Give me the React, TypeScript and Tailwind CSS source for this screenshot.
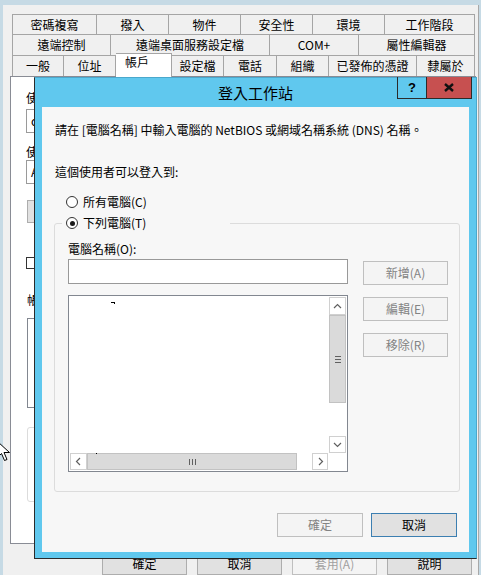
const tabRows = [
  [
    { label: '密碼複寫', w: 85 },
    { label: '撥入', w: 72 },
    { label: '物件', w: 72 },
    { label: '安全性', w: 72 },
    { label: '環境', w: 72 },
    { label: '工作階段', w: 90 },
  ],
  [
    { label: '遠端控制', w: 99 },
    { label: '遠端桌面服務設定檔', w: 159 },
    { label: 'COM+', w: 89 },
    { label: '屬性編輯器', w: 116 },
  ],
  [
    { label: '一般', w: 52 },
    { label: '位址', w: 52 },
    { label: '帳戶', w: 56, active: true },
    { label: '設定檔', w: 52 },
    { label: '電話', w: 53 },
    { label: '組織', w: 52 },
    { label: '已發佈的憑證', w: 88 },
    { label: '隸屬於', w: 58 },
  ],
];

const rowHeights = ['h-[20px]', 'h-[21px]', 'h-[21px]'];

function Chevron({ dir }: { dir: 'up' | 'down' | 'left' | 'right' }) {
  const pts = {
    up: '1,6 4.5,2.5 8,6',
    down: '1,3 4.5,6.5 8,3',
    left: '6,1 2.5,4.5 6,8',
    right: '3,1 6.5,4.5 3,8',
  }[dir];
  return (
    <svg width="9" height="9" viewBox="0 0 9 9">
      <polyline points={pts} fill="none" stroke="#606060" strokeWidth="1.2" />
    </svg>
  );
}

function Radio({ checked, label, indent }: { checked?: boolean; label: string; indent: string }) {
  return (
    <div className={`flex items-center h-[14px] ${indent}`}>
      <span className="w-[12px] h-[12px] rounded-full border border-[#333] bg-white flex items-center justify-center">
        {checked && <span className="w-[5px] h-[5px] rounded-full bg-[#1a1a1a]" />}
      </span>
      <span className="ml-[5px] leading-[14px]">{label}</span>
    </div>
  );
}

function DisabledButton({ label, w }: { label: string; w: string }) {
  return (
    <div className={`${w} h-[24px] border border-[#bfbfbf] bg-[#f4f4f4] text-[#838383] flex items-center justify-center leading-none`}>
      {label}
    </div>
  );
}

function BackWindow() {
  return (
    <div className="ml-[3px] mt-[5px] w-[476px] h-[570px] bg-[#f0f0f0] border-r border-[#a8a8a8]">
      {/* Tabs */}
      <div className="pt-[9px] pl-[9px]">
        {tabRows.map((row, i) => (
          <div key={i} className={`flex ${rowHeights[i]}`}>
            {row.map((tab, j) => (
              <div
                key={tab.label}
                style={{ width: tab.w }}
                className={
                  tab.active
                    ? 'relative z-10 -mt-[2px] h-[24px] bg-white border-t border-r border-[#a5a5a5] pl-[9px] pt-[1px] leading-[14px]'
                    : `flex items-center justify-center border-t border-r border-[#a5a5a5] leading-none ${j === 0 ? 'border-l' : ''}`
                }
              >
                {tab.label}
              </div>
            ))}
          </div>
        ))}
      </div>

      {/* Tab page */}
      <div className="ml-[7px] w-[466px] h-[468px] bg-white border border-[#898c95] pl-[15px] pt-[14px]">
        <div className="leading-[14px] whitespace-nowrap">使用者登入名稱(U):</div>
        <div className="mt-[4px] w-[200px] h-[24px] border border-[#9a9a9a] bg-white pl-[4px] leading-[22px]">chen</div>
        <div className="mt-[12px] leading-[14px] whitespace-nowrap">使用者登入名稱 (Windows 2000 前版)(W):</div>
        <div className="mt-[1px] w-[200px] h-[24px] border border-[#9a9a9a] bg-white pl-[4px] leading-[22px]">AD\</div>
        <div className="mt-[16px] w-[90px] h-[23px] border border-[#adadad] bg-[#e1e1e1] ml-px flex items-center justify-center">登入時數(L)...</div>
        <div className="mt-[33px] flex items-center h-[13px]">
          <span className="w-[12px] h-[12px] border border-[#333] bg-white" />
          <span className="ml-[5px]">解除鎖定帳戶(N)</span>
        </div>
        <div className="mt-[24px] leading-[14px] ml-px">帳戶選項(O):</div>
        <div className="mt-[11px] ml-px w-[300px] h-[90px] border border-[#828790] bg-white" />
        <div className="mt-[19px] ml-px w-[400px] h-[75px] border border-[#dcdcdc] rounded-[3px]" />
      </div>

      {/* Back window buttons */}
      <div className="mt-[8px] ml-[99px] flex gap-[10px]">
        {['確定', '取消'].map((b) => (
          <div key={b} className="w-[85px] h-[23px] border border-[#adadad] bg-[#e1e1e1] flex items-center justify-center">{b}</div>
        ))}
        <div className="w-[85px] h-[23px] border border-[#bfbfbf] bg-[#f4f4f4] text-[#a0a0a0] flex items-center justify-center">套用(A)</div>
        <div className="w-[85px] h-[23px] border border-[#adadad] bg-[#e1e1e1] flex items-center justify-center">說明</div>
      </div>
    </div>
  );
}

function ListBox() {
  return (
    <div className="relative mt-[11px] w-[280px] h-[177px] border border-[#828790] bg-white p-px flex flex-col">
      {/* stray marks */}
      <span className="absolute left-[42px] top-[6px] w-[4px] h-px bg-black" />
      <span className="absolute left-[45px] top-[6px] w-px h-[2px] bg-black" />
      <span className="absolute left-[27px] top-[157px] w-px h-px bg-black" />
      <div className="flex flex-1">
        <div className="flex-1" />
        <div className="w-[17px] flex flex-col">
          <div className="h-[18px] border border-[#d0d0d0] bg-white flex items-center justify-center"><Chevron dir="up" /></div>
          <div className="h-[88px] border border-[#c2c2c2] bg-[#dadada] flex flex-col items-center justify-center gap-[2px]">
            <span className="w-[6px] h-px bg-[#606060]" />
            <span className="w-[6px] h-px bg-[#606060]" />
            <span className="w-[6px] h-px bg-[#606060]" />
          </div>
          <div className="flex-1" />
          <div className="h-[17px] border border-[#d0d0d0] bg-white flex items-center justify-center"><Chevron dir="down" /></div>
        </div>
      </div>
      <div className="h-[17px] flex">
        <div className="w-[17px] border border-[#d0d0d0] bg-white flex items-center justify-center"><Chevron dir="left" /></div>
        <div className="w-[210px] border border-[#c2c2c2] bg-[#dadada] flex items-center justify-center gap-[2px]">
          <span className="w-px h-[6px] bg-[#606060]" />
          <span className="w-px h-[6px] bg-[#606060]" />
          <span className="w-px h-[6px] bg-[#606060]" />
        </div>
        <div className="flex-1" />
        <div className="w-[16px] border border-[#d0d0d0] bg-white flex items-center justify-center"><Chevron dir="right" /></div>
        <div className="w-[18px] bg-white" />
      </div>
    </div>
  );
}

function Dialog() {
  return (
    <div className="absolute left-[34px] top-[77px] w-[443px] h-[482px] bg-[#60c8ee] border-l border-b border-[#2b2b2b] border-t border-t-[#4aa8cc] border-r border-r-[#4aa8cc] flex flex-col">
      {/* Title bar */}
      <div className="relative h-[29px] flex items-center justify-center text-[15px] leading-none">
        登入工作站
        <div className="absolute -top-px right-[4px] flex border-x border-b border-[#2b2b2b] h-[22px]">
          <div className="w-[29px] border-r border-[#2b2b2b] flex items-center justify-center font-bold text-[13px] font-['Liberation_Sans',sans-serif]">?</div>
          <div className="w-[44px] bg-[#c75050] flex items-center justify-center">
            <svg width="10" height="9" viewBox="0 0 10 9">
              <path d="M1 1 L9 8 M9 1 L1 8" stroke="#111" strokeWidth="2.4" />
            </svg>
          </div>
        </div>
      </div>

      {/* Content */}
      <div className="mx-[7px] mb-[6px] flex-1 bg-[#f7f7f7] px-[12px] pt-[16px]">
        <p className="ml-px leading-[14px] whitespace-nowrap">請在 [電腦名稱] 中輸入電腦的 NetBIOS 或網域名稱系統 (DNS) 名稱。</p>
        <p className="ml-px mt-[28px] leading-[14px]">這個使用者可以登入到:</p>
        <div className="mt-[16px]">
          <Radio label="所有電腦(C)" indent="ml-[12px]" />
        </div>

        {/* Group box */}
        <div className="relative mt-[14px] w-[406px] h-[269px] border border-[#dcdcdc] rounded-[3px] px-[13px] pt-[18px]">
          <div className="absolute left-[7px] -top-[8px] w-[168px] bg-[#f7f7f7]">
            <Radio checked label="下列電腦(T)" indent="ml-[4px]" />
          </div>
          <div className="leading-[14px]">電腦名稱(O):</div>
          <div className="flex">
            <div>
              <div className="mt-[3px] w-[280px] h-[25px] border border-[#999] bg-white" />
              <ListBox />
            </div>
            <div className="ml-[15px] mt-[5px] flex flex-col gap-[12px]">
              <DisabledButton label="新增(A)" w="w-[85px]" />
              <DisabledButton label="編輯(E)" w="w-[85px]" />
              <DisabledButton label="移除(R)" w="w-[85px]" />
            </div>
          </div>
        </div>

        {/* OK / Cancel */}
        <div className="mt-[21px] flex justify-end gap-[8px]">
          <DisabledButton label="確定" w="w-[86px]" />
          <div className="w-[86px] h-[24px] border border-[#3c7fb1] bg-[#e1e1e1] flex items-center justify-center leading-none">取消</div>
        </div>
      </div>
    </div>
  );
}

export default function App() {
  return (
    <div className="relative w-[481px] h-[575px] overflow-hidden bg-[#c6dae5] text-[12px] text-black font-['Noto_Sans_CJK_TC','Noto_Sans',sans-serif]">
      <BackWindow />
      <Dialog />
      {/* mouse pointer */}
      <svg className="absolute left-[-3px] top-[441px]" width="14" height="22" viewBox="0 0 14 22">
        <path d="M0.5 0.5 L0.5 16.5 L4.5 12.5 L7.5 19.5 L10 18.5 L7 11.5 L12.5 11.5 Z" fill="#fff" stroke="#000" strokeWidth="1" />
      </svg>
    </div>
  );
}
